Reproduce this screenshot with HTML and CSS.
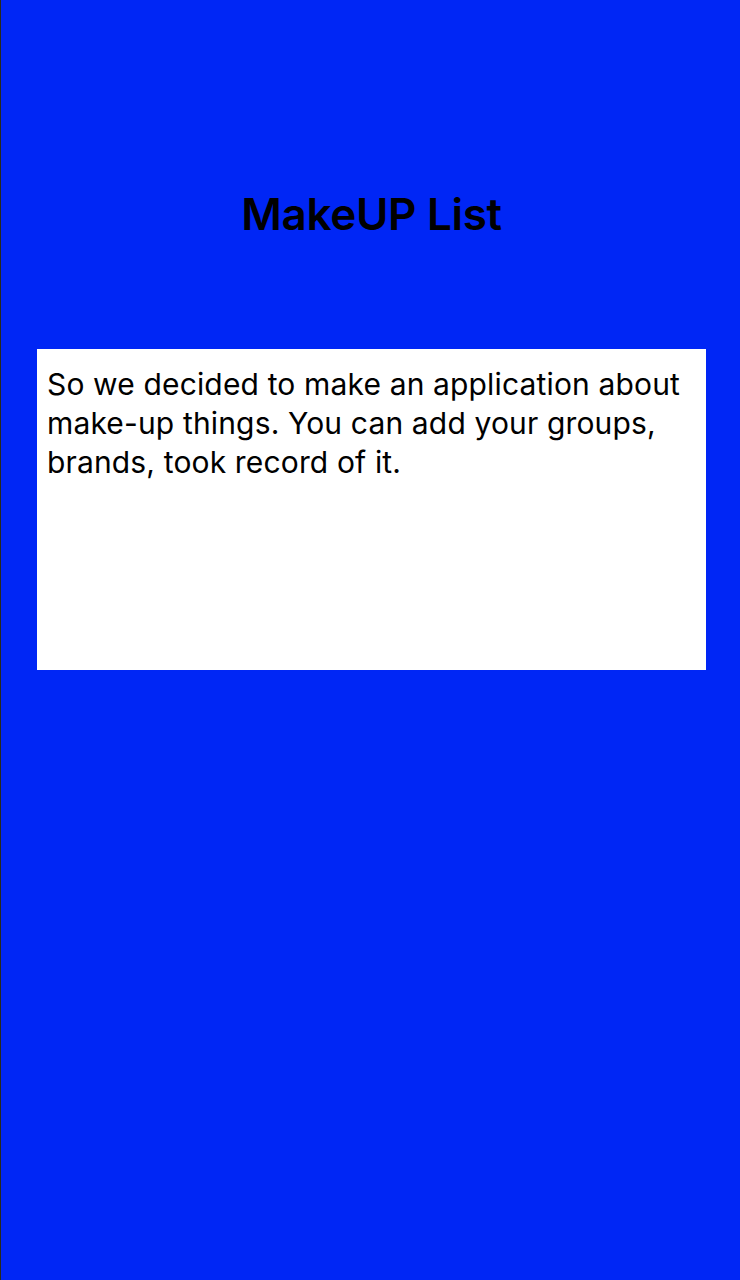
FILE: index.html
```html
<!DOCTYPE html>
<html>
<head>
<meta charset="utf-8">
<link rel="stylesheet" href="styles.css">
</head>
<body>
<div class="screen">
  <h1 class="title">MakeUP List</h1>
  <div class="card">
    <p class="text">So we decided to make an application about make-up things. You can add your groups, brands, took record of it.</p>
  </div>
</div>
</body>
</html>
```
FILE: styles.css
```css
html, body {
  margin: 0;
  padding: 0;
}
body {
  width: 740px;
  height: 1280px;
  overflow: hidden;
}
.screen {
  box-sizing: border-box;
  width: 740px;
  height: 1280px;
  background: #0026f5;
  border-left: 1px solid #2a2a1a;
  display: flex;
  flex-direction: column;
  align-items: stretch;
  padding: 0 34px 0 36px;
  font-family: Inter, "Noto Sans", sans-serif;
  color: #000;
}
.title {
  margin: 186px 0 0 0;
  height: 56px;
  line-height: 56px;
  text-align: center;
  font-size: 44px;
  font-weight: 600;
  letter-spacing: -0.3px;
}
.card {
  margin-top: 107px;
  height: 321px;
  background: #fff;
  box-sizing: border-box;
  padding: 16px 10px 0 10px;
}
.text {
  margin: 0;
  font-size: 30px;
  line-height: 39px;
  letter-spacing: 0.15px;
}
```
